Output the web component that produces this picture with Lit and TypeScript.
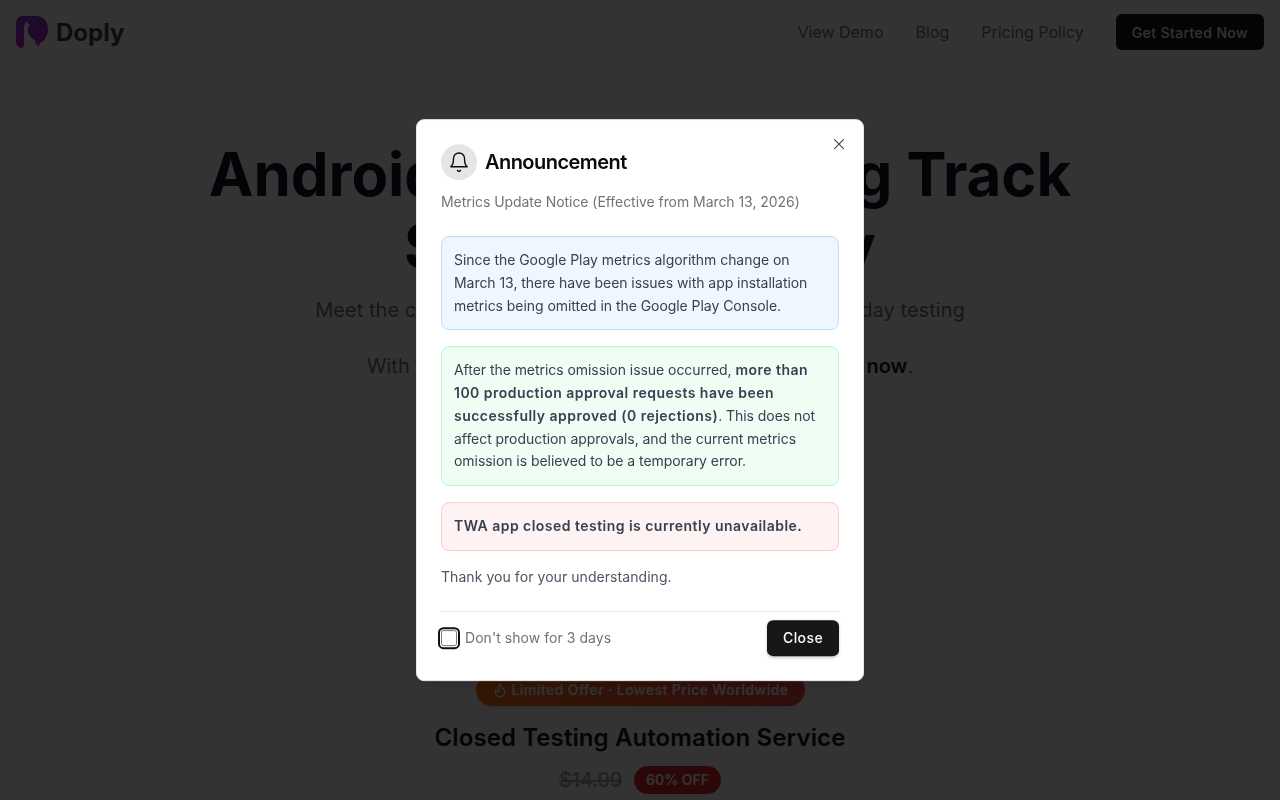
import { LitElement, css, html, type TemplateResult } from 'lit';
import { customElement } from 'lit/decorators.js';

@customElement('app-root')
export class AppRoot extends LitElement {
  private logo(): TemplateResult {
    return html`<svg class="logo" viewBox="0 0 32 32" aria-hidden="true">
      <defs>
        <linearGradient id="lg" x1="0" y1="0" x2="0" y2="1">
          <stop offset="0" stop-color="#8a2fc8" />
          <stop offset="1" stop-color="#b82ad0" />
        </linearGradient>
      </defs>
      <path
        d="M7 0H20C27 0 32 5 32 13C32 20 28.500 25.500 24 27L23 30.500L19 27.500C15 27 13 25 8 24.500V29C8 31 6.500 32 5 32C2.500 32 0 29 0 25V7C0 3 3 0 7 0Z"
        fill="url(#lg)"
      />
      <path
        d="M8 25V11C8 9.500 8.700 8 9.200 7.500V5.500L10.300 6.500L11.500 5.500V7.500L14 9L13.300 10.500L12 10.500C11.800 13 11.800 15 12.400 17C13.300 20 15.500 22.500 19.500 24.800L19 27.500C15 27 12 25.500 8 25Z"
        fill="#fff"
      />
    </svg>`;
  }

  render(): TemplateResult {
    return html`
      <header class="topbar">
        <a class="brand">${this.logo()}<span>Doply</span></a>
        <nav class="nav">
          <a>View Demo</a>
          <a>Blog</a>
          <a>Pricing Policy</a>
          <button class="cta">Get Started Now</button>
        </nav>
      </header>

      <main class="hero">
        <h1>Android Closed Testing Track<br />Solved Instantly</h1>
        <p class="lead">
          Meet the closed testing requirement for 12 testers and 14 day testing<br /><br />
          With Doply, get production access approval <strong>starting now</strong>.
        </p>
        <div class="offer">
          <svg class="flame" viewBox="0 0 24 24">
            <path
              d="M8.500 14.500A2.500 2.500 0 0 0 11 12c0-1.380-.5-2-1-3-1.070-2.140-.22-4.050 2-6 .5 2.500 2 4.900 4 6.500 2 1.600 3 3.500 3 5.500a7 7 0 1 1-14 0c0-1.150.43-2.290 1-3a2.500 2.500 0 0 0 2.500 2.500z"
            />
          </svg>
          Limited Offer · Lowest Price Worldwide
        </div>
        <h2>Closed Testing Automation Service</h2>
        <div class="price">
          <s>$14.99</s>
          <span class="off">60% OFF</span>
        </div>
      </main>

      <div class="overlay"></div>
      <section class="dialog" role="dialog">
        <button class="x" aria-label="Close">
          <svg viewBox="0 0 24 24"><path d="M18 6 6 18M6 6l12 12" /></svg>
        </button>
        <div class="title-row">
          <span class="bell">
            <svg viewBox="0 0 24 24">
              <path d="M6 8a6 6 0 0 1 12 0c0 7 3 9 3 9H3s3-2 3-9" />
              <path d="M10.300 21a1.940 1.940 0 0 0 3.400 0" />
            </svg>
          </span>
          <h3>Announcement</h3>
        </div>
        <p class="sub">Metrics Update Notice (Effective from March 13, 2026)</p>
        <div class="notice blue">
          Since the Google Play metrics algorithm change on March 13, there have been issues with
          app installation metrics being omitted in the Google Play Console.
        </div>
        <div class="notice green">
          After the metrics omission issue occurred,
          <strong>more than 100 production approval requests have been successfully approved (0 rejections)</strong>.
          This does not affect production approvals, and the current metrics omission is believed to
          be a temporary error.
        </div>
        <div class="notice red"><strong>TWA app closed testing is currently unavailable.</strong></div>
        <p class="thanks">Thank you for your understanding.</p>
        <footer class="foot">
          <label class="check"><input class="box" type="checkbox" />Don't show for 3 days</label>
          <button class="close">Close</button>
        </footer>
      </section>
    `;
  }

  static styles = css`
    :host {
      display: block;
      height: 100vh;
      overflow: hidden;
      background: #fff;
      color: #111827;
      font-family: Inter, 'Liberation Sans', sans-serif;
    }

    .topbar {
      display: flex;
      align-items: center;
      justify-content: space-between;
      height: 64px;
      padding: 0 16px;
    }

    .brand {
      display: flex;
      align-items: center;
      gap: 8px;
      font-size: 24px;
      font-weight: 700;
      color: #374151;
    }

    .logo {
      width: 32px;
      height: 32px;
    }

    .nav {
      display: flex;
      align-items: center;
      gap: 32px;
      font-size: 16px;
      color: #737373;
    }

    .cta {
      height: 36px;
      padding: 0 16px;
      border: 0;
      border-radius: 6px;
      background: #171717;
      color: #fafafa;
      font: 500 14px Inter, sans-serif;
      letter-spacing: 0.4px;
    }

    .hero {
      display: flex;
      flex-direction: column;
      align-items: center;
      padding-top: 74px;
      text-align: center;
    }

    h1 {
      margin: 0;
      font-size: 60px;
      line-height: 72px;
      font-weight: 700;
      letter-spacing: -0.07px;
      color: #111827;
    }

    .lead {
      margin: 14px 0 0;
      font-size: 20px;
      line-height: 28px;
      letter-spacing: 0.04px;
      color: #737373;
    }

    .lead strong {
      font-weight: 600;
      color: #171717;
    }

    .offer {
      display: flex;
      align-items: center;
      gap: 4px;
      margin-top: 294px;
      box-sizing: border-box;
      height: 32px;
      padding: 0 16px 1px;
      border-radius: 999px;
      background: linear-gradient(90deg, #f97316, #ef4444);
      color: #fff;
      font-size: 14px;
      font-weight: 600;
      letter-spacing: 0.38px;
      box-shadow: 0 4px 6px -1px rgba(0, 0, 0, 0.1);
    }

    .flame {
      width: 16px;
      height: 16px;
      fill: none;
      stroke: currentColor;
      stroke-width: 2;
      stroke-linecap: round;
      stroke-linejoin: round;
    }

    h2 {
      margin: 16px 0 0;
      font-size: 24px;
      line-height: 32px;
      font-weight: 600;
      letter-spacing: 0.1px;
      color: #111827;
    }

    .price {
      display: flex;
      align-items: center;
      gap: 12px;
      margin-top: 12px;
    }

    .price s {
      font-size: 20px;
      font-weight: 500;
      letter-spacing: -0.3px;
      color: #9ca3af;
    }

    .off {
      padding: 4px 12px;
      border-radius: 999px;
      background: #dc2626;
      color: #fff;
      font-size: 14px;
      font-weight: 600;
      line-height: 20px;
    }

    .overlay {
      position: fixed;
      inset: 0;
      background: rgba(0, 0, 0, 0.8);
    }

    .dialog {
      position: fixed;
      top: 50%;
      left: 50%;
      transform: translate(-50%, -50%);
      box-sizing: border-box;
      width: 448px;
      padding: 24px;
      border: 1px solid #e5e5e5;
      border-radius: 8px;
      background: #fff;
      box-shadow: 0 10px 15px -3px rgba(0, 0, 0, 0.1);
    }

    .x {
      position: absolute;
      top: 15px;
      right: 15px;
      width: 18px;
      height: 18px;
      padding: 0;
      border: 0;
      background: none;
      color: #404040;
    }

    .x svg,
    .bell svg {
      display: block;
      fill: none;
      stroke: currentColor;
      stroke-width: 1.5;
      stroke-linecap: round;
      stroke-linejoin: round;
    }

    .title-row {
      display: flex;
      align-items: center;
      gap: 8px;
    }

    .bell {
      display: flex;
      align-items: center;
      justify-content: center;
      width: 36px;
      height: 36px;
      border-radius: 50%;
      background: #e5e5e5;
      color: #0a0a0a;
    }

    .bell svg {
      width: 22px;
      height: 22px;
    }

    h3 {
      margin: 0;
      font-size: 20px;
      line-height: 28px;
      font-weight: 600;
      letter-spacing: -0.55px;
      color: #0a0a0a;
    }

    .sub {
      margin: 12px 0 0;
      font-size: 14px;
      line-height: 20px;
      letter-spacing: -0.055px;
      color: #737373;
    }

    .notice {
      margin-top: 16px;
      padding: 12px;
      border: 1px solid;
      border-radius: 8px;
      font-size: 14px;
      line-height: 22.75px;
      letter-spacing: -0.05px;
      color: #374151;
    }

    .notice strong {
      font-weight: 600;
      letter-spacing: 0.47px;
    }

    .sub + .notice {
      margin-top: 24px;
    }

    .blue {
      background: #eff6ff;
      border-color: #bfdbfe;
    }

    .green {
      background: #f0fdf4;
      border-color: #bbf7d0;
    }

    .red {
      background: #fef2f2;
      border-color: #fecaca;
    }

    .thanks {
      margin: 16px 0 0;
      font-size: 14px;
      line-height: 20px;
      letter-spacing: 0.06px;
      color: #4b5563;
    }

    .foot {
      display: flex;
      align-items: center;
      justify-content: space-between;
      margin-top: 24px;
      padding-top: 8px;
      border-top: 1px solid #e5e5e5;
    }

    .check {
      display: flex;
      align-items: center;
      gap: 8px;
      font-size: 14px;
      letter-spacing: 0.05px;
      color: #737373;
    }

    .box {
      appearance: none;
      box-sizing: border-box;
      width: 16px;
      height: 16px;
      margin: 0;
      border: 1px solid #767676;
      border-radius: 2.500px;
      background: #fff;
      outline: 2px solid #101010;
      outline-offset: 1px;
    }

    .close {
      height: 36px;
      padding: 0 16px;
      border: 0;
      border-radius: 6px;
      background: #171717;
      color: #fafafa;
      font: 500 14px Inter, sans-serif;
      letter-spacing: 0.4px;
      box-shadow: 0 1px 3px rgba(0, 0, 0, 0.2);
    }
  `;
}

declare global {
  interface HTMLElementTagNameMap {
    'app-root': AppRoot;
  }
}
